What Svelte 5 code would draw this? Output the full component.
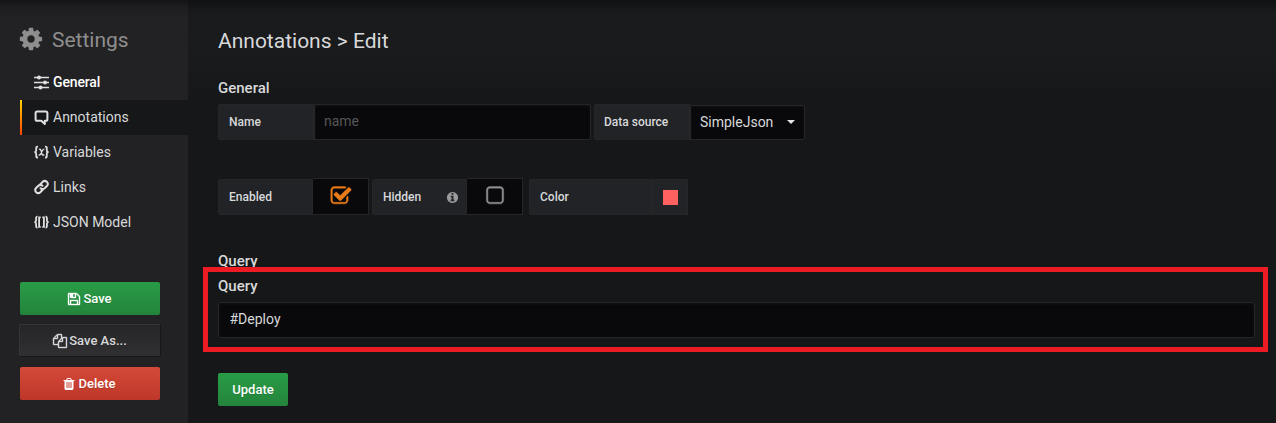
<script>
  const fa = {
    cog: 'M1152 896q0-106-75-181t-181-75-181 75-75 181 75 181 181 75 181-75 75-181zm512-109v222q0 12-8 23t-20 13l-185 28q-19 54-39 91 35 50 107 138 10 12 10 25t-9 23q-27 37-99 108t-94 71q-12 0-26-9l-138-108q-44 23-91 38-16 136-29 186-7 28-36 28h-222q-14 0-24.500-8.500t-11.500-21.500l-28-184q-49-16-90-37l-141 107q-10 9-25 9-14 0-25-11-126-114-165-168-7-10-7-23 0-12 8-23 15-21 51-66.500t54-70.500q-27-50-41-99l-183-27q-13-2-21-12.500t-8-23.500v-222q0-12 8-23t19-13l186-28q14-46 39-92-40-57-107-138-10-12-10-24 0-10 9-23 26-36 98.500-107.500t94.500-71.500q13 0 26 10l138 107q44-23 91-38 16-136 29-186 7-28 36-28h222q14 0 24.500 8.500t11.500 21.500l28 184q49 16 90 37l142-107q9-9 24-9 13 0 25 10 129 119 165 170 7 8 7 22 0 12-8 23-15 21-51 66.500t-54 70.500q26 50 41 98l183 28q13 2 21 12.500t8 23.500z',
    save: 'M512 1536h768v-384h-768v384zm896 0h128v-896q0-14-10-38.500t-20-34.500l-281-281q-10-10-34-20t-39-10v416q0 40-28 68t-68 28h-576q-40 0-68-28t-28-68v-416h-128v1280h128v-416q0-40 28-68t68-28h832q40 0 68 28t28 68v416zm-384-928v-320q0-13-9.500-22.500t-22.500-9.500h-192q-13 0-22.500 9.500t-9.500 22.500v320q0 13 9.500 22.500t22.500 9.500h192q13 0 22.500-9.500t9.500-22.500zm640 32v928q0 40-28 68t-68 28h-1344q-40 0-68-28t-28-68v-1344q0-40 28-68t68-28h928q40 0 88 20t76 48l280 280q28 28 48 76t20 88z',
    copy: 'M1696 384q40 0 68 28t28 68v1216q0 40-28 68t-68 28h-960q-40 0-68-28t-28-68v-288h-544q-40 0-68-28t-28-68v-672q0-40 20-88t48-76l408-408q28-28 76-48t88-20h416q40 0 68 28t28 68v328q68-40 128-40h416zm-544 213l-299 299h299v-299zm-640-384l-299 299h299v-299zm196 647l316-316v-416h-384v416q0 40-28 68t-68 28h-416v640h512v-256q0-40 20-88t48-76zm956 804v-1152h-384v416q0 40-28 68t-68 28h-416v640h896z',
    trash: 'M704 1376v-704q0-14-9-23t-23-9h-64q-14 0-23 9t-9 23v704q0 14 9 23t23 9h64q14 0 23-9t9-23zm256 0v-704q0-14-9-23t-23-9h-64q-14 0-23 9t-9 23v704q0 14 9 23t23 9h64q14 0 23-9t9-23zm256 0v-704q0-14-9-23t-23-9h-64q-14 0-23 9t-9 23v704q0 14 9 23t23 9h64q14 0 23-9t9-23zm-544-992h448l-48-117q-7-9-17-11h-317q-10 2-17 11zm928 32v64q0 14-9 23t-23 9h-96v948q0 83-47 143.500t-113 60.500h-832q-66 0-113-58.500t-47-141.500v-952h-96q-14 0-23-9t-9-23v-64q0-14 9-23t23-9h309l70-167q15-37 54-63t79-26h320q40 0 79 26t54 63l70 167h309q14 0 23 9t9 23z',
    checked: 'M1472 930v318q0 119-84.500 203.500t-203.500 84.500h-832q-119 0-203.500-84.500t-84.500-203.500v-832q0-119 84.500-203.500t203.500-84.500h832q63 0 117 25 15 7 18 23 3 17-9 29l-49 49q-10 10-23 10-3 0-9-2-23-6-45-6h-832q-66 0-113 47t-47 113v832q0 66 47 113t113 47h832q66 0 113-47t47-113v-254q0-13 9-22l64-64q10-10 23-10 6 0 12 3 20 8 20 29zm231-489l-814 814q-24 24-57 24t-57-24l-430-430q-24-24-24-57t24-57l110-110q24-24 57-24t57 24l263 263 647-647q24-24 57-24t57 24l110 110q24 24 24 57t-24 57z',
    square: 'M1312 256h-832q-66 0-113 47t-47 113v832q0 66 47 113t113 47h832q66 0 113-47t47-113v-832q0-66-47-113t-113-47zm288 160v832q0 119-84.500 203.500t-203.500 84.500h-832q-119 0-203.500-84.500t-84.500-203.500v-832q0-119 84.500-203.500t203.500-84.500h832q119 0 203.500 84.500t84.500 203.500z',
    info: 'M1152 1376v-160q0-14-9-23t-23-9h-96v-512q0-14-9-23t-23-9h-320q-14 0-23 9t-9 23v160q0 14 9 23t23 9h96v320h-96q-14 0-23 9t-9 23v160q0 14 9 23t23 9h448q14 0 23-9t9-23zm-128-896v-160q0-14-9-23t-23-9h-192q-14 0-23 9t-9 23v160q0 14 9 23t23 9h192q14 0 23-9t9-23zm640 416q0 209-103 385.500t-279.500 279.500-385.500 103-385.500-103-279.500-279.500-103-385.500 103-385.500 279.500-279.500 385.500-103 385.500 103 279.500 279.500 103 385.500z'
  };
  const nav = ['General', 'Annotations', 'Variables', 'Links', 'JSON Model'];
  const active = 'Annotations';
</script>

{#snippet icon(name, size)}
  <svg class="fa {name}" width={size} height={size} viewBox="0 0 1792 1792"><path d={fa[name]} /></svg>
{/snippet}

<div class="page">
  <aside>
    <h2>{@render icon('cog', 26)}<span>Settings</span></h2>
    <nav>
      {#each nav as item}
        <a class:active={item === active} class:first={item === 'General'}>
          <svg class="glyph" width="15" height="16" viewBox="0 0 15 16" fill="none" stroke="currentColor">
            {#if item === 'General'}
              <path stroke-width="1.600" d="M0 3.500H15M0 8.500H15M0 13.500H15" />
              <g fill="currentColor" stroke="none">
                <circle cx="5" cy="3.500" r="2" /><circle cx="11" cy="8.500" r="2" /><circle cx="6.500" cy="13.500" r="2" />
              </g>
            {:else if item === 'Annotations'}
              <path stroke-width="2" stroke-linejoin="round" d="M3.200 2.400H11.800Q13.400 2.400 13.400 4V10.200Q13.400 11.800 11.800 11.800H10.800V15L7.300 11.800H3.200Q1.600 11.800 1.600 10.200V4Q1.600 2.400 3.200 2.400Z" />
            {:else if item === 'Variables'}
              <path stroke-width="1.800" d="M4 2.700Q2.100 2.500 2.200 4.300V6.500Q2.200 8 .4 8.100Q2.200 8.200 2.200 9.800V12Q2.100 13.700 4 13.500M11 2.700Q12.900 2.500 12.800 4.300V6.500Q12.800 8 14.600 8.100Q12.800 8.200 12.800 9.800V12Q12.900 13.700 11 13.500" />
              <path stroke-width="1.400" d="M4.900 5.500Q6.500 4.400 7.200 6.900L7.900 9.700Q8.600 12 10.200 10.600M10.300 5.200Q9.200 4.900 8 7.300L6.900 9.600Q6 11.400 4.700 10.900" />
            {:else if item === 'Links'}
              <g stroke-width="2" stroke-linecap="round">
                <path d="M6.200 5.400 8.700 2.800Q10.700 .9 12.800 2.800 14.900 4.900 12.900 7L10.600 9.300Q8.500 11 6.600 9.200" />
                <path d="M8.700 10.700 6.300 13.200Q4.300 15.100 2.200 13.200 .2 11.100 2.100 9L4.400 6.700Q6.500 5 8.400 6.800" />
              </g>
            {:else}
              <path stroke-width="1.800" d="M3.500 2.700Q2.100 2.500 2.100 4.300V6.500Q2.100 8 .4 8.100Q2.100 8.200 2.100 9.800V12Q2.100 13.700 3.500 13.500M11.500 2.700Q12.900 2.500 12.900 4.300V6.500Q12.900 8 14.600 8.100Q12.900 8.200 12.900 9.800V12Q12.900 13.700 11.500 13.500M6.700 3.300H5.100V12.900H6.700M8.300 3.300H9.900V12.900H8.300" />
            {/if}
          </svg>
          <span>{item}</span>
        </a>
      {/each}
    </nav>
    <div class="actions">
      <button class="btn green">{@render icon('save', 14)}Save</button>
      <button class="btn inverse">{@render icon('copy', 14)}Save As...</button>
      <button class="btn red">{@render icon('trash', 14)}Delete</button>
    </div>
  </aside>

  <main>
    <h3>Annotations &gt; Edit</h3>
    <h5 class="general">General</h5>
    <div class="row names">
      <span class="label">Name</span>
      <input class="name" placeholder="name" />
      <span class="label source">Data source</span>
      <div class="select">SimpleJson<i></i></div>
    </div>
    <div class="row switches">
      <span class="label enabled">Enabled</span>
      <div class="switch on">{@render icon('checked', 22)}</div>
      <span class="label hidden">Hidden {@render icon('info', 13)}</span>
      <div class="switch">{@render icon('square', 22)}</div>
      <span class="label color">Color</span>
      <div class="swatch"><b></b></div>
    </div>
    <h5 class="query">Query</h5>
    <h5 class="subquery">Query</h5>
    <input class="text" value="#Deploy" />
    <button class="btn green update">Update</button>
  </main>
  <div class="highlight"></div>
</div>

<style>
  :global(body) { margin: 0; background: #171819; }
  * { box-sizing: border-box; }
  .page {
    position: relative; display: flex; width: 1276px; height: 423px; overflow: hidden;
    background: linear-gradient(#101112 0, #191a1c 12px, #1a1b1d 45px, #161719 100px);
    color: #d8d9da; font: 14px/20px Roboto, sans-serif;
  }
  svg { display: block; flex: none; }
  .fa { fill: currentColor; }
  aside { width: 188px; flex: none; padding-left: 20px; background: linear-gradient(#151517 0, #1e1e20 8px, #222224 18px); }
  h2 { margin: 0; padding-top: 24px; height: 65px; display: flex; align-items: flex-start; font-weight: 400; font-size: 21px; line-height: 32px; color: #8e8e8e; }
  h2 svg { margin: 2px 8px 0 -2px; }
  nav a { display: flex; align-items: center; height: 35px; padding: 0 0 2px 14px; }
  nav a span { margin-left: 4px; }
  nav .first span { color: #fff; font-weight: 500; letter-spacing: -.15px; }
  nav .active { position: relative; background: #161719; }
  nav .active::before { content: ''; position: absolute; left: 0; top: 0; width: 2px; height: 35px; background: linear-gradient(#ffd500, #ff4400); }
  .glyph { color: #e0e0e0; }
  .first .glyph, .active .glyph { margin-top: 0; }
  .actions { margin-top: 42px; display: flex; flex-direction: column; gap: 9px; }
  .btn {
    display: flex; align-items: center; justify-content: center; gap: 2px; padding: 0 1px 0 0; border: 0;
    width: 140px; height: 33px; border-radius: 2px; color: #fff;
    font: 500 13px/20px Roboto, sans-serif; text-shadow: 0 1px 0 rgba(0,0,0,.15);
  }
  .save, .copy { stroke: currentColor; stroke-width: 50; overflow: visible; }
  .green { background: linear-gradient(#299c46, #23843b); }
  .red { background: linear-gradient(#d44939, #bd3728); margin-top: 1px; padding-right: 2px; }
  .inverse { width: 142px; margin-left: -1px; padding: 0; color: #d8d9da; background: linear-gradient(#262628, #303032); border: 1px solid #353537; border-right-color: #171718; border-bottom-color: #171718; }
  main { flex: 1; padding-left: 30px; }
  h3 { margin: 0; padding-top: 25px; height: 78px; font-size: 21px; line-height: 32px; font-weight: 400; }
  h5 { margin: 0; font-size: 15px; line-height: 20px; font-weight: 500; }
  .row { display: flex; }
  .general { height: 26px; }
  .label { display: flex; align-items: center; width: 96px; height: 36px; padding: 0 10px; border: 1px solid #262628; border-radius: 2px 0 0 2px; background: #212327; font: 500 12px/18px Roboto, sans-serif; }
  input, .select { border: 1px solid #262628; border-radius: 0 2px 2px 0; background: #09090b; color: #d8d9da; font: 14px/20px Roboto, sans-serif; outline: 0; box-shadow: inset 0 1px 3px #141416; }
  .name { width: 277px; height: 36px; padding: 0 9px 2px; }
  .name::placeholder { color: #555658; opacity: 1; }
  .source { margin-left: 3px; padding: 0 9px; }
  .select { display: flex; align-items: center; justify-content: space-between; width: 115px; height: 35px; margin-top: 1px; padding: 0 9px 2px; }
  .select i { border: 4px solid transparent; border-top-color: #e5e5e5; border-bottom: 0; }
  .switches { margin-top: 39px; height: 36px; }
  .enabled, .hidden { width: 95px; }
  .hidden { margin-left: 3px; justify-content: space-between; padding-right: 7px; }
  .hidden svg { color: #9a9a9c; }
  .switch { display: flex; align-items: center; justify-content: center; width: 56px; height: 37px; margin-top: -1px; border: 1px solid #262628; border-left: 0; background: #09090b; color: #8e8e8e; padding-bottom: 2px; }
  .switch svg { margin-left: 1px; stroke: currentColor; stroke-width: 35; }
  .on { color: #eb7b18; }
  .color { width: 123px; margin-left: 6px; }
  .swatch { display: flex; align-items: center; justify-content: center; width: 36px; height: 36px; background: #212327; border: 1px solid #262628; }
  .swatch b { width: 15px; height: 15px; background: #ff6060; }
  .query { height: 25px; margin-top: 36px; }
  .subquery { height: 26px; }
  .text { display: block; width: 1037px; height: 36px; padding: 0 10.500px 2px; border-radius: 2px; }
  .update { width: 70px; margin-top: 35px; padding: 0; }
  .highlight { position: absolute; left: 203px; top: 267px; width: 1065px; height: 85px; border: 5px solid #ed1c24; }
</style>
